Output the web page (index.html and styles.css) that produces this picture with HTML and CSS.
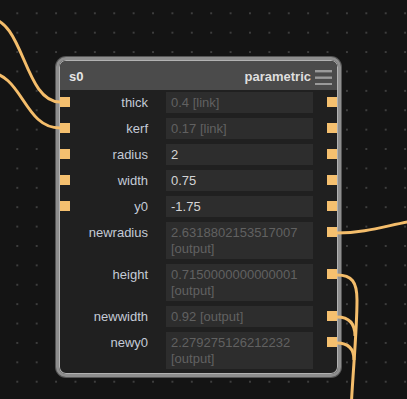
FILE: index.html
```html
<!DOCTYPE html>
<html lang="en">
<head>
    <meta charset="UTF-8">
    <title>s0 - parametric</title>
    <link rel="stylesheet" href="styles.css">
</head>
<body>
    <div class="canvas">
        <!-- 节点 -->
        <div class="node">
            <div class="node-head">
                <span class="node-name">s0</span>
                <span class="node-type">parametric</span>
                <svg class="node-menu" width="17" height="16" viewBox="0 0 17 16">
                    <rect x="0" y="1" width="17" height="2.4" fill="#9a9a9a"/>
                    <rect x="0" y="7.5" width="17" height="2.4" fill="#9a9a9a"/>
                    <rect x="0" y="14" width="17" height="2" fill="#9a9a9a"/>
                </svg>
            </div>
            <div class="node-body">
                <div class="row">
                    <span class="port port-in"></span>
                    <span class="row-label">thick</span>
                    <div class="row-value muted">0.4 [link]</div>
                    <span class="port port-out"></span>
                </div>
                <div class="row">
                    <span class="port port-in"></span>
                    <span class="row-label">kerf</span>
                    <div class="row-value muted">0.17 [link]</div>
                    <span class="port port-out"></span>
                </div>
                <div class="row">
                    <span class="port port-in"></span>
                    <span class="row-label">radius</span>
                    <div class="row-value">2</div>
                    <span class="port port-out"></span>
                </div>
                <div class="row">
                    <span class="port port-in"></span>
                    <span class="row-label">width</span>
                    <div class="row-value">0.75</div>
                    <span class="port port-out"></span>
                </div>
                <div class="row">
                    <span class="port port-in"></span>
                    <span class="row-label">y0</span>
                    <div class="row-value">-1.75</div>
                    <span class="port port-out"></span>
                </div>
                <div class="row">
                    <span class="row-label">newradius</span>
                    <div class="row-value muted">2.6318802153517007<br>[output]</div>
                    <span class="port port-out"></span>
                </div>
                <div class="row">
                    <span class="row-label">height</span>
                    <div class="row-value muted">0.7150000000000001<br>[output]</div>
                    <span class="port port-out"></span>
                </div>
                <div class="row">
                    <span class="row-label">newwidth</span>
                    <div class="row-value muted">0.92 [output]</div>
                    <span class="port port-out"></span>
                </div>
                <div class="row">
                    <span class="row-label">newy0</span>
                    <div class="row-value muted">2.279275126212232<br>[output]</div>
                    <span class="port port-out"></span>
                </div>
            </div>
        </div>

        <!-- 连线 -->
        <svg class="wires" width="407" height="399" viewBox="0 0 407 399">
            <path d="M -12 18 C 24 18, 24 102, 60 102"/>
            <path d="M -14 72 C 23 72, 23 128, 60 128"/>
            <path d="M 337 233 C 365 233, 385 226, 412 221"/>
            <path d="M 337 275 C 352 275, 357 282, 357 300 C 357 330, 353 370, 351 410"/>
            <path d="M 337 317 C 348 317, 355 322, 355 336"/>
            <path d="M 337 343 C 348 343, 354 348, 354 360"/>
        </svg>
    </div>
</body>
</html>
```

FILE: styles.css
```css
* {
    margin: 0;
    padding: 0;
    box-sizing: border-box;
}

body {
    font-family: "Liberation Sans", Arial, sans-serif;
    font-size: 13px;
    background: #141414;
    overflow: hidden;
}

.canvas {
    position: relative;
    width: 407px;
    height: 399px;
    background-color: #141414;
    background-image: radial-gradient(circle, #3e3e3e 0.7px, transparent 1.1px);
    background-size: 19.4px 19.4px;
    background-position: 7.6px 3.6px;
}

.node {
    position: absolute;
    left: 56px;
    top: 57px;
    width: 285px;
    height: 320px;
    border: 3px solid #8e8e8e;
    border-radius: 10px;
    background: #202020;
    box-shadow: 0 0 0 1px #555, inset 0 0 0 1px #b2b2b2;
}

.node-head {
    display: flex;
    align-items: flex-start;
    height: 29px;
    padding: 4px 5px 0 9px;
    margin: 1px 1px 0;
    background: #4b4b4b;
    border-radius: 6px 6px 0 0;
    line-height: 24px;
    font-weight: bold;
    color: #e6e6e6;
}

.node-name {
    flex: 1;
}

.node-type {
    color: #dedede;
}

.node-menu {
    margin: 4px 0 0 4px;
}

.node-body {
    display: flex;
    flex-direction: column;
    gap: 5px;
    padding-top: 2px;
}

.row {
    position: relative;
    display: grid;
    grid-template-columns: 89px 147px;
    column-gap: 18px;
    align-items: start;
}

.row-label {
    text-align: right;
    padding-top: 3px;
    line-height: 16px;
    color: #c4cbd7;
}

.row-value {
    background: #2d2d2d;
    padding: 3px 5px 2px;
    line-height: 16px;
    color: #d4d4d4;
    white-space: nowrap;
}

.row-value.muted {
    color: #616161;
}

.port {
    position: absolute;
    top: 5px;
    width: 10px;
    height: 10px;
    background: #f5c06f;
}

.port-in {
    left: 1px;
}

.port-out {
    left: 268px;
}

.wires {
    position: absolute;
    left: 0;
    top: 0;
    pointer-events: none;
}

.wires path {
    fill: none;
    stroke: #f4bd6b;
    stroke-width: 3;
}
```
